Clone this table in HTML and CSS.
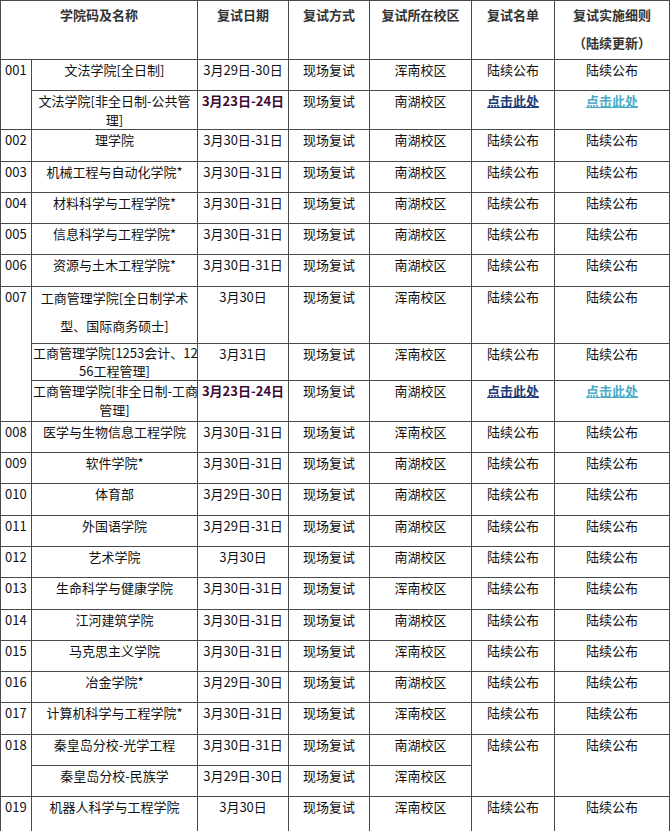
FILE: index.html
```html
<!DOCTYPE html>
<html lang="zh-CN">
<head>
<meta charset="utf-8">
<title>复试安排</title>
<link rel="stylesheet" href="styles.css">
</head>
<body>
<table class="sched">
  <colgroup>
    <col class="c-code"><col class="c-name"><col class="c-date"><col class="c-way"><col class="c-campus"><col class="c-list"><col class="c-rule">
  </colgroup>
  <thead>
    <tr class="head">
      <th colspan="2">学院码及名称</th>
      <th>复试日期</th>
      <th>复试方式</th>
      <th>复试所在校区</th>
      <th>复试名单</th>
      <th>复试实施细则<br>（陆续更新）</th>
    </tr>
  </thead>
  <tbody>
    <tr class="r">
      <td class="code" rowspan="2">001</td>
      <td>文法学院[全日制]</td><td>3月29日-30日</td><td>现场复试</td><td>浑南校区</td><td>陆续公布</td><td>陆续公布</td>
    </tr>
    <tr class="r40">
      <td class="lh20">文法学院[非全日制-公共管<br>理]</td><td class="hot">3月23日-24日</td><td>现场复试</td><td>南湖校区</td><td><a class="link1" href="#">点击此处</a></td><td><a class="link2" href="#">点击此处</a></td>
    </tr>
    <tr class="r"><td class="code">002</td><td>理学院</td><td>3月30日-31日</td><td>现场复试</td><td>南湖校区</td><td>陆续公布</td><td>陆续公布</td></tr>
    <tr class="r"><td class="code">003</td><td>机械工程与自动化学院*</td><td>3月30日-31日</td><td>现场复试</td><td>南湖校区</td><td>陆续公布</td><td>陆续公布</td></tr>
    <tr class="r"><td class="code">004</td><td>材料科学与工程学院*</td><td>3月30日-31日</td><td>现场复试</td><td>南湖校区</td><td>陆续公布</td><td>陆续公布</td></tr>
    <tr class="r"><td class="code">005</td><td>信息科学与工程学院*</td><td>3月30日-31日</td><td>现场复试</td><td>南湖校区</td><td>陆续公布</td><td>陆续公布</td></tr>
    <tr class="r"><td class="code">006</td><td>资源与土木工程学院*</td><td>3月30日-31日</td><td>现场复试</td><td>南湖校区</td><td>陆续公布</td><td>陆续公布</td></tr>
    <tr class="r57">
      <td class="code" rowspan="3">007</td>
      <td class="lh28"><div class="up">工商管理学院[全日制学术<br>型、国际商务硕士]</div></td><td>3月30日</td><td>现场复试</td><td>浑南校区</td><td>陆续公布</td><td>陆续公布</td>
    </tr>
    <tr class="r35">
      <td class="lh18">工商管理学院[1253会计、12<br>56工程管理]</td><td>3月31日</td><td>现场复试</td><td>浑南校区</td><td>陆续公布</td><td>陆续公布</td>
    </tr>
    <tr class="r43">
      <td class="lh19">工商管理学院[非全日制-工商<br>管理]</td><td class="hot">3月23日-24日</td><td>现场复试</td><td>南湖校区</td><td><a class="link1" href="#">点击此处</a></td><td><a class="link2" href="#">点击此处</a></td>
    </tr>
    <tr class="r"><td class="code">008</td><td>医学与生物信息工程学院</td><td>3月30日-31日</td><td>现场复试</td><td>浑南校区</td><td>陆续公布</td><td>陆续公布</td></tr>
    <tr class="r"><td class="code">009</td><td>软件学院*</td><td>3月30日-31日</td><td>现场复试</td><td>南湖校区</td><td>陆续公布</td><td>陆续公布</td></tr>
    <tr class="r"><td class="code">010</td><td>体育部</td><td>3月29日-30日</td><td>现场复试</td><td>南湖校区</td><td>陆续公布</td><td>陆续公布</td></tr>
    <tr class="r"><td class="code">011</td><td>外国语学院</td><td>3月29日-31日</td><td>现场复试</td><td>南湖校区</td><td>陆续公布</td><td>陆续公布</td></tr>
    <tr class="r"><td class="code">012</td><td>艺术学院</td><td>3月30日</td><td>现场复试</td><td>南湖校区</td><td>陆续公布</td><td>陆续公布</td></tr>
    <tr class="r"><td class="code">013</td><td>生命科学与健康学院</td><td>3月30日-31日</td><td>现场复试</td><td>浑南校区</td><td>陆续公布</td><td>陆续公布</td></tr>
    <tr class="r"><td class="code">014</td><td>江河建筑学院</td><td>3月30日-31日</td><td>现场复试</td><td>南湖校区</td><td>陆续公布</td><td>陆续公布</td></tr>
    <tr class="r"><td class="code">015</td><td>马克思主义学院</td><td>3月30日-31日</td><td>现场复试</td><td>浑南校区</td><td>陆续公布</td><td>陆续公布</td></tr>
    <tr class="r"><td class="code">016</td><td>冶金学院*</td><td>3月29日-30日</td><td>现场复试</td><td>南湖校区</td><td>陆续公布</td><td>陆续公布</td></tr>
    <tr class="r"><td class="code">017</td><td>计算机科学与工程学院*</td><td>3月30日-31日</td><td>现场复试</td><td>浑南校区</td><td>陆续公布</td><td>陆续公布</td></tr>
    <tr class="r">
      <td class="code" rowspan="2">018</td>
      <td>秦皇岛分校-光学工程</td><td>3月30日-31日</td><td>现场复试</td><td>南湖校区</td><td rowspan="2">陆续公布</td><td rowspan="2">陆续公布</td>
    </tr>
    <tr class="r"><td>秦皇岛分校-民族学</td><td>3月29日-30日</td><td>现场复试</td><td>浑南校区</td></tr>
    <tr class="r37"><td class="code">019</td><td>机器人科学与工程学院</td><td>3月30日</td><td>现场复试</td><td>浑南校区</td><td>陆续公布</td><td>陆续公布</td></tr>
  </tbody>
</table>
</body>
</html>
```

FILE: styles.css
```css
html, body {
  margin: 0;
  padding: 0;
  background: #ffffff;
}

.sched {
  width: 669px;
  table-layout: fixed;
  border-collapse: collapse;
  font-family: "Noto Sans CJK SC", sans-serif;
  font-size: 13px;
  color: #111111;
}

.c-code { width: 31px; }
.c-name { width: 166px; }
.c-date { width: 91px; }
.c-way { width: 81px; }
.c-campus { width: 102px; }
.c-list { width: 83px; }
.c-rule { width: 115px; }

.sched th,
.sched td {
  border: 1px solid #4a4a4a;
  vertical-align: top;
  text-align: center;
  padding: 0 1px;
  white-space: nowrap;
  overflow: visible;
}

.sched th {
  font-weight: bold;
  color: #333333;
  line-height: 28px;
}

.head { height: 59px; }

.sched td {
  line-height: 20px;
}

.r { height: 31.3px; }
.r37 { height: 36px; }
.r40 { height: 38px; }
.r57 { height: 57px; }
.r35 { height: 35px; }
.r43 { height: 41px; }

.sched td.code {
  text-align: left;
  padding-left: 4px;
}

.sched td.lh20 { line-height: 19px; }
.sched td.lh18 { line-height: 18px; }
.sched td.lh19 { line-height: 19px; }
.sched td.lh28 { line-height: 28px; }

.up { margin-top: -3px; }

.hot {
  font-weight: bold;
  color: #3c0a36;
}

.link1 {
  color: #1f3c78;
  font-weight: bold;
  text-decoration: underline;
}

.link2 {
  color: #4bacc6;
  font-weight: bold;
  text-decoration: underline;
}
```
